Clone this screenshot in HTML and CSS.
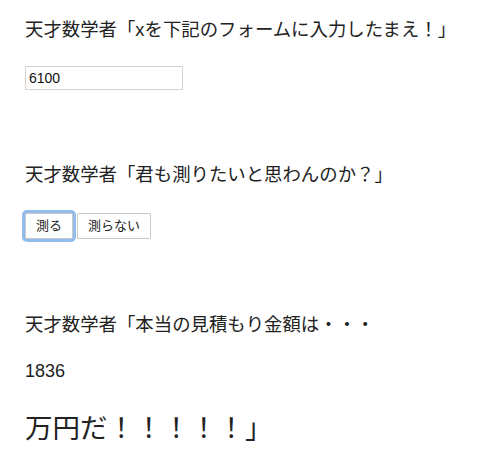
FILE: index.html
```html
<!DOCTYPE html>
<html lang="ja">
<head>
    <meta charset="UTF-8">
    <meta name="viewport" content="width=device-width, initial-scale=1.0">
    <title>天才数学者</title>
    <link rel="stylesheet" href="styles.css">
</head>
<body>
    <div class="container">
        <p class="talk">天才数学者「xを下記のフォームに入力したまえ！」</p>
        <input type="text" id="x-input" class="x-input" value="6100">

        <p class="talk ask">天才数学者「君も測りたいと思わんのか？」</p>
        <div class="buttons">
            <button id="measure-btn" class="btn focused">測る</button>
            <button id="skip-btn" class="btn">測らない</button>
        </div>

        <p class="talk answer">天才数学者「本当の見積もり金額は・・・</p>
        <p class="result" id="result">1836</p>
        <p class="finale">万円だ！！！！！」</p>
    </div>

    <script>
// xから見積もり金額を出す
function estimate(x) {
    return Math.round(x * 0.301);
}

document.getElementById("measure-btn").addEventListener("click", function() {
    const x = parseFloat(document.getElementById("x-input").value) || 0;
    document.getElementById("result").textContent = estimate(x);
});
    </script>
</body>
</html>
```

FILE: styles.css
```css
body {
    font-family: "Liberation Sans", "Noto Sans CJK JP", sans-serif;
    color: #222;
    margin: 0;
    padding: 0;
    background: #fff;
}

.container {
    padding: 18px 25px 0;
}

.talk {
    font-size: 18.4px;
    line-height: 24px;
    margin: 0;
}

.x-input {
    display: block;
    box-sizing: border-box;
    width: 158px;
    height: 24px;
    margin: 24px 0 0;
    padding: 1px 3px;
    font-family: "Liberation Sans", sans-serif;
    font-size: 14px;
    color: #111;
    border: 1px solid #d4d4d4;
    outline: none;
}

.ask {
    margin-top: 73px;
}

.buttons {
    display: flex;
    gap: 4px;
    margin-top: 26px;
}

.btn {
    box-sizing: border-box;
    height: 26px;
    padding: 0 10px;
    font-family: "Liberation Sans", "Noto Sans CJK JP", sans-serif;
    font-size: 13px;
    line-height: 16px;
    color: #222;
    background: #fff;
    border: 1px solid #c9c9c9;
    border-radius: 1px;
    cursor: pointer;
}

/* focus ring like the screenshot */
.btn.focused {
    box-shadow: 0 0 0 3px rgba(110, 165, 230, 0.75);
    border-radius: 2px;
}

.answer {
    margin-top: 74px;
}

.result {
    font-size: 18px;
    line-height: 24px;
    margin: 22px 0 0;
}

.finale {
    font-size: 27.5px;
    line-height: 36px;
    margin: 28px 0 0;
}
```
